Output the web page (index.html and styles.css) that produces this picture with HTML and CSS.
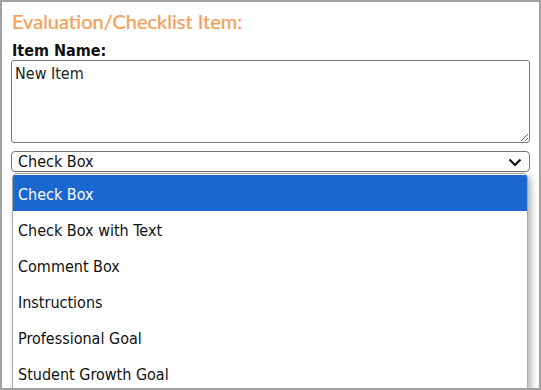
FILE: index.html
```html
<!DOCTYPE html>
<html>
<head>
<meta charset="utf-8">
<link rel="stylesheet" href="styles.css">
</head>
<body>
<div class="frame">
  <div class="content">
    <h1 class="title">Evaluation/Checklist Item:</h1>
    <label class="label" for="item-name">Item Name:</label>
    <textarea id="item-name" class="textarea">New Item</textarea>
    <div class="select">
      <span class="select-value">Check Box</span>
      <svg class="chevron" width="14" height="9" viewBox="0 0 14 9"><path d="M1.5 1.5 L7 7 L12.5 1.5" fill="none" stroke="#111" stroke-width="2.2"/></svg>
    </div>
  </div>
  <ul class="dropdown">
    <li class="option selected">Check Box</li>
    <li class="option">Check Box with Text</li>
    <li class="option">Comment Box</li>
    <li class="option">Instructions</li>
    <li class="option">Professional Goal</li>
    <li class="option">Student Growth Goal</li>
  </ul>
</div>
</body>
</html>
```
FILE: styles.css
```css
html, body {
  margin: 0;
  padding: 0;
  background: #ffffff;
}
.frame {
  position: relative;
  width: 541px;
  height: 390px;
  box-sizing: border-box;
  border: 2px solid #a0a0a0;
  overflow: hidden;
  background: #ffffff;
}
.content {
  display: flex;
  flex-direction: column;
  padding: 8px 9px 0 9px;
  font-family: "DejaVu Sans Condensed", "DejaVu Sans", sans-serif;
}
.title {
  margin: 0;
  font-family: "Lato", sans-serif;
  font-weight: 400;
  font-size: 20px;
  line-height: 22px;
  color: #f59d55;
  padding-left: 1px;
  -webkit-text-stroke: 0.2px #f59d55;
}
.label {
  margin-top: 10px;
  font-weight: bold;
  font-size: 16px;
  line-height: 18px;
  color: #111111;
  padding-left: 1px;
}
.textarea {
  display: block;
  box-sizing: border-box;
  width: 100%;
  height: 83px;
  margin: 0;
  border: 1px solid #767676;
  border-radius: 3px;
  padding: 3px 3px;
  font-family: "DejaVu Sans Condensed", "DejaVu Sans", sans-serif;
  font-size: 16px;
  color: #222222;
  resize: both;
  outline: none;
}
.select {
  margin-top: 8px;
  height: 21px;
  box-sizing: border-box;
  border: 1px solid #767676;
  border-radius: 4px;
  display: flex;
  align-items: center;
  justify-content: space-between;
  padding: 0 7px 0 6px;
  font-size: 16px;
  color: #111111;
  background: #ffffff;
}
.select-value {
  line-height: 19px;
}
.chevron {
  display: block;
  margin-top: 1px;
}
.dropdown {
  position: absolute;
  left: 10px;
  top: 171px;
  width: 516px;
  margin: 0;
  padding: 1px 0 0 0;
  list-style: none;
  box-sizing: border-box;
  border: 1px solid #a8a8a8;
  border-radius: 5px;
  background: #ffffff;
  box-shadow: 3px 3px 7px rgba(0, 0, 0, 0.3);
  font-family: "DejaVu Sans Condensed", "DejaVu Sans", sans-serif;
  font-size: 16px;
  overflow: hidden;
}
.option {
  box-sizing: border-box;
  height: 36px;
  line-height: 33px;
  padding: 3px 0 0 5px;
  color: #111111;
}
.option.selected {
  background: #1a67d2;
  color: #ffffff;
}
```
